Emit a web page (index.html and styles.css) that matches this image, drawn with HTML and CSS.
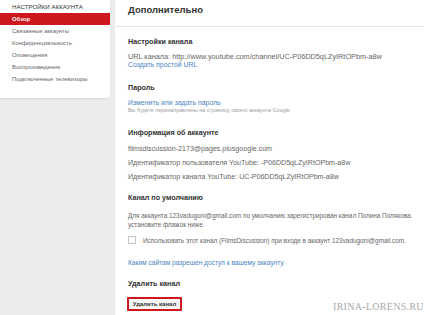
FILE: index.html
```html
<!DOCTYPE html>
<html lang="ru">
<head>
  <meta charset="UTF-8" />
  <title>Дополнительно</title>
  <link rel="stylesheet" href="styles.css">
</head>
<body>

  <aside class="sidebar">
    <div class="sidebar-title">Настройки аккаунта</div>
    <div class="nav-item active">Обзор</div>
    <div class="nav-item">Связанные аккаунты</div>
    <div class="nav-item">Конфиденциальность</div>
    <div class="nav-item">Оповещения</div>
    <div class="nav-item">Воспроизведение</div>
    <div class="nav-item">Подключенные телевизоры</div>
  </aside>

  <main class="content">
    <h1 class="page-title">Дополнительно</h1>

    <section class="block first">
      <h3>Настройки канала</h3>
      <p class="line tight">URL канала: http://www.youtube.com/channel/UC-P06DD5qLZyIRtOPbm-a8w</p>
      <a class="line tight link" href="#">Создать простой URL</a>
    </section>

    <section class="block">
      <h3>Пароль</h3>
      <a class="line tight link gap" href="#">Изменить или задать пароль</a>
      <p class="note">Вы будете перенаправлены на страницу своего аккаунта Google.</p>
    </section>

    <section class="block">
      <h3>Информация об аккаунте</h3>
      <p class="line info">filmsdiscussion-2173@pages.plusgoogle.com</p>
      <p class="line info">Идентификатор пользователя YouTube: -P06DD5qLZyIRtOPbm-a8w</p>
      <p class="line info">Идентификатор канала YouTube: UC-P06DD5qLZyIRtOPbm-a8w</p>
    </section>

    <section class="block default">
      <h3>Канал по умолчанию</h3>
      <p class="para">Для аккаунта 123vadugoni@gmail.com по умолчанию зарегистрирован канал Полина Полякова.<br>установите флажок ниже.</p>
      <label class="check-row">
        <span class="checkbox"></span>
        Использовать этот канал (FilmsDiscussion) при входе в аккаунт 123vadugoni@gmail.com.
      </label>
    </section>

    <a class="line tight link sites" href="#">Каким сайтам разрешен доступ к вашему аккаунту</a>

    <section class="block delete">
      <h3>Удалить канал</h3>
      <button class="btn-delete">Удалить канал</button>
    </section>
  </main>

  <div class="watermark">IRINA-LORENS.RU</div>

</body>
</html>
```

FILE: styles.css
```css
:root {
  --fon: #ececec;
  --texto: #666666;
  --titulo: #333333;
  --link: #4a86c4;
  --vermelho: #cc181e;
}

* {
  box-sizing: border-box;
}

html, body {
  height: 315px;
  overflow: hidden;
}

body {
  margin: 0;
  font-family: 'Liberation Sans', Arial, sans-serif;
  background-color: var(--fon);
  color: var(--texto);
  display: flex;
  align-items: flex-start;
  position: relative;
}

.sidebar {
  width: 110px;
  flex-shrink: 0;
  background-color: #ffffff;
  padding-bottom: 13px;
  border-radius: 0 0 3px 0;
  box-shadow: 0 1px 2px rgba(0,0,0,0.08);
}

.sidebar-title {
  height: 13px;
  line-height: 13px;
  padding-left: 12px;
  font-size: 6.2px;
  color: var(--titulo);
  text-transform: uppercase;
}

.nav-item {
  height: 12px;
  line-height: 12px;
  padding-left: 12px;
  font-size: 5.9px;
  color: var(--texto);
}

.nav-item.active {
  background-color: var(--vermelho);
  color: #ffffff;
  font-weight: bold;
}

.content {
  flex: 1;
  min-width: 0;
  margin-left: 5px;
  height: 315px;
  background-color: #ffffff;
  padding-left: 13px;
}

.page-title {
  margin: 0 0 0 -13px;
  padding: 0 0 6px 13px;
  height: 27px;
  line-height: 20px;
  font-size: 9.5px;
  font-weight: bold;
  color: var(--titulo);
  border-bottom: 1px solid #e3e3e3;
}

h3 {
  margin: 0;
  height: 10px;
  line-height: 10px;
  font-size: 7.2px;
  font-weight: bold;
  color: var(--titulo);
}

.block {
  margin-top: 14px;
}

.block.first {
  margin-top: 10px;
}

.line {
  display: block;
  margin: 0;
  font-size: 7.3px;
  white-space: nowrap;
}

.tight {
  line-height: 8px;
}

.block.first h3 {
  margin-bottom: 6px;
}

.link {
  color: var(--link);
  text-decoration: none;
  font-size: 6.9px;
}

.gap {
  margin-top: 6px;
}

.note {
  margin: 0;
  line-height: 7px;
  font-size: 5.4px;
  color: #a0a0a0;
  white-space: nowrap;
}

.info {
  line-height: 10px;
  margin-top: 4px;
  font-size: 7.1px;
}

.block h3 + .info {
  margin-top: 6px;
}

.block.default {
  margin-top: 11px;
}

.para {
  margin: 8px 0 0;
  font-size: 6.4px;
  line-height: 9px;
  white-space: nowrap;
}

.check-row {
  display: flex;
  align-items: center;
  gap: 7px;
  height: 10px;
  margin-top: 6px;
  font-size: 6.4px;
  white-space: nowrap;
}

.checkbox {
  width: 8px;
  height: 8px;
  flex-shrink: 0;
  border: 1px solid #c6c6c6;
  background-color: #ffffff;
}

.sites {
  margin-top: 14px;
  font-size: 6.6px;
}

.block.delete {
  margin-top: 12px;
}

.btn-delete {
  display: block;
  margin: 8px 0 0 -1px;
  width: 55px;
  height: 14px;
  padding: 0;
  font-family: inherit;
  font-size: 6px;
  font-weight: bold;
  color: var(--titulo);
  background-color: #f8f8f8;
  border: 2px solid var(--vermelho);
  border-radius: 1px;
}

.watermark {
  position: absolute;
  left: 333px;
  top: 301px;
  font-family: 'Liberation Serif', serif;
  font-size: 10px;
  letter-spacing: 0.3px;
  color: #a9a9a9;
}
```
